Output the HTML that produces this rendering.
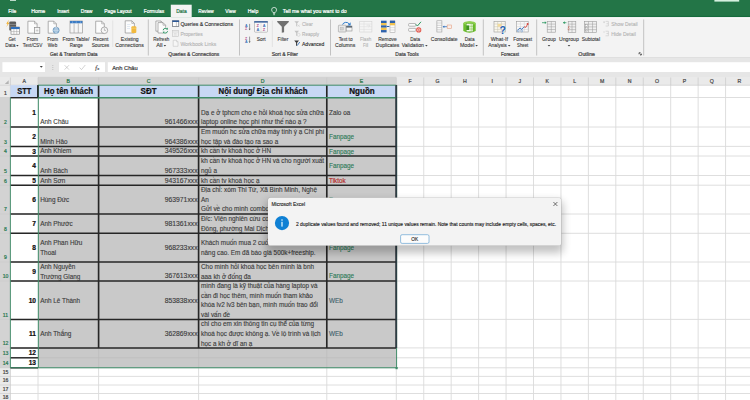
<!DOCTYPE html>
<html lang="vi"><head><meta charset="utf-8"><title>Excel - Remove Duplicates</title>
<style>
html,body{margin:0;padding:0;background:#fff;}
body{width:750px;height:400px;overflow:hidden;font-family:"Liberation Sans",sans-serif;}
svg{display:block;font-family:"Liberation Sans",sans-serif;}
</style></head><body>
<svg width="750" height="400" viewBox="0 0 750 400">
<rect x="0.00" y="0.00" width="750.00" height="400.00" fill="#ffffff" />
<rect x="0.00" y="0.00" width="750.00" height="17.40" fill="#237547" />
<rect x="0.00" y="15.90" width="750.00" height="1.50" fill="#166b3d" />
<rect x="714.40" y="0.00" width="24.80" height="1.60" fill="#d5f0df" />
<rect x="10.00" y="0.00" width="6.00" height="0.90" fill="#cfe6d8" />
<rect x="170.80" y="4.70" width="20.90" height="12.60" fill="#f3f3f3" />
<rect x="0.00" y="17.20" width="750.00" height="40.20" fill="#f3f3f3" />
<rect x="0.00" y="17.40" width="170.80" height="1.10" fill="#fcfcfc" />
<rect x="191.70" y="17.40" width="560.00" height="1.10" fill="#fcfcfc" />
<rect x="0.00" y="57.40" width="750.00" height="27.80" fill="#e6e6e6" />
<rect x="0.00" y="57.20" width="750.00" height="0.70" fill="#d9d9d9" />
<rect x="2.40" y="62.20" width="42.60" height="9.80" fill="#fff" />
<rect x="59.00" y="62.20" width="46.00" height="9.80" fill="#fff" />
<rect x="107.80" y="62.20" width="642.20" height="9.80" fill="#fff" />
<text x="8.30" y="13.12" font-size="5.5" fill="#ffffff" textLength="8.00" lengthAdjust="spacingAndGlyphs"  stroke="#ffffff" stroke-width="0.22">File</text>
<text x="31.20" y="13.12" font-size="5.5" fill="#ffffff" textLength="14.10" lengthAdjust="spacingAndGlyphs"  stroke="#ffffff" stroke-width="0.22">Home</text>
<text x="57.20" y="13.12" font-size="5.5" fill="#ffffff" textLength="12.00" lengthAdjust="spacingAndGlyphs"  stroke="#ffffff" stroke-width="0.22">Insert</text>
<text x="80.80" y="13.12" font-size="5.5" fill="#ffffff" textLength="11.70" lengthAdjust="spacingAndGlyphs"  stroke="#ffffff" stroke-width="0.22">Draw</text>
<text x="104.20" y="13.12" font-size="5.5" fill="#ffffff" textLength="27.50" lengthAdjust="spacingAndGlyphs"  stroke="#ffffff" stroke-width="0.22">Page Layout</text>
<text x="143.70" y="13.12" font-size="5.5" fill="#ffffff" textLength="20.50" lengthAdjust="spacingAndGlyphs"  stroke="#ffffff" stroke-width="0.22">Formulas</text>
<text x="198.30" y="13.12" font-size="5.5" fill="#ffffff" textLength="15.50" lengthAdjust="spacingAndGlyphs"  stroke="#ffffff" stroke-width="0.22">Review</text>
<text x="225.30" y="13.12" font-size="5.5" fill="#ffffff" textLength="10.50" lengthAdjust="spacingAndGlyphs"  stroke="#ffffff" stroke-width="0.22">View</text>
<text x="247.80" y="13.12" font-size="5.5" fill="#ffffff" textLength="10.50" lengthAdjust="spacingAndGlyphs"  stroke="#ffffff" stroke-width="0.22">Help</text>
<text x="282.80" y="13.12" font-size="5.5" fill="#ffffff" textLength="63.90" lengthAdjust="spacingAndGlyphs"  stroke="#ffffff" stroke-width="0.22">Tell me what you want to do</text>
<text x="176.30" y="13.12" font-size="5.5" fill="#237547" textLength="10.40" lengthAdjust="spacingAndGlyphs"  stroke="#237547" stroke-width="0.22">Data</text>
<g fill="none" stroke="#fff" stroke-width="0.7"><path d="M273 12.6c-0.3-0.9-1.4-1.3-1.4-2.7a2.5 2.5 0 0 1 5 0c0 1.4-1.1 1.8-1.4 2.7z"/><path d="M273.1 13.7h2M273.4 14.7h1.4"/></g>
<text x="8.40" y="40.52" font-size="5.5" fill="#3b3b3b" textLength="7.20" lengthAdjust="spacingAndGlyphs"  stroke="#3b3b3b" stroke-width="0.12">Get</text>
<text x="5.20" y="47.32" font-size="5.5" fill="#3b3b3b" textLength="10.20" lengthAdjust="spacingAndGlyphs"  stroke="#3b3b3b" stroke-width="0.12">Data</text>
<text x="26.80" y="40.52" font-size="5.5" fill="#3b3b3b" textLength="11.20" lengthAdjust="spacingAndGlyphs"  stroke="#3b3b3b" stroke-width="0.12">From</text>
<text x="22.80" y="47.32" font-size="5.5" fill="#3b3b3b" textLength="19.60" lengthAdjust="spacingAndGlyphs"  stroke="#3b3b3b" stroke-width="0.12">Text/CSV</text>
<text x="47.20" y="40.52" font-size="5.5" fill="#3b3b3b" textLength="10.80" lengthAdjust="spacingAndGlyphs"  stroke="#3b3b3b" stroke-width="0.12">From</text>
<text x="47.80" y="47.32" font-size="5.5" fill="#3b3b3b" textLength="9.40" lengthAdjust="spacingAndGlyphs"  stroke="#3b3b3b" stroke-width="0.12">Web</text>
<text x="62.50" y="40.52" font-size="5.5" fill="#3b3b3b" textLength="27.00" lengthAdjust="spacingAndGlyphs"  stroke="#3b3b3b" stroke-width="0.12">From Table/</text>
<text x="69.70" y="47.32" font-size="5.5" fill="#3b3b3b" textLength="13.10" lengthAdjust="spacingAndGlyphs"  stroke="#3b3b3b" stroke-width="0.12">Range</text>
<text x="93.00" y="40.52" font-size="5.5" fill="#3b3b3b" textLength="15.30" lengthAdjust="spacingAndGlyphs"  stroke="#3b3b3b" stroke-width="0.12">Recent</text>
<text x="91.70" y="47.32" font-size="5.5" fill="#3b3b3b" textLength="17.50" lengthAdjust="spacingAndGlyphs"  stroke="#3b3b3b" stroke-width="0.12">Sources</text>
<text x="120.80" y="40.52" font-size="5.5" fill="#3b3b3b" textLength="17.90" lengthAdjust="spacingAndGlyphs"  stroke="#3b3b3b" stroke-width="0.12">Existing</text>
<text x="115.30" y="47.32" font-size="5.5" fill="#3b3b3b" textLength="28.40" lengthAdjust="spacingAndGlyphs"  stroke="#3b3b3b" stroke-width="0.12">Connections</text>
<text x="153.30" y="40.52" font-size="5.5" fill="#3b3b3b" textLength="15.90" lengthAdjust="spacingAndGlyphs"  stroke="#3b3b3b" stroke-width="0.12">Refresh</text>
<text x="156.30" y="47.32" font-size="5.5" fill="#3b3b3b" textLength="6.30" lengthAdjust="spacingAndGlyphs"  stroke="#3b3b3b" stroke-width="0.12">All</text>
<text x="256.80" y="40.52" font-size="5.5" fill="#3b3b3b" textLength="8.80" lengthAdjust="spacingAndGlyphs"  stroke="#3b3b3b" stroke-width="0.12">Sort</text>
<text x="277.60" y="40.52" font-size="5.5" fill="#3b3b3b" textLength="10.80" lengthAdjust="spacingAndGlyphs"  stroke="#3b3b3b" stroke-width="0.12">Filter</text>
<text x="338.70" y="40.52" font-size="5.5" fill="#3b3b3b" textLength="13.80" lengthAdjust="spacingAndGlyphs"  stroke="#3b3b3b" stroke-width="0.12">Text to</text>
<text x="335.00" y="47.32" font-size="5.5" fill="#3b3b3b" textLength="20.30" lengthAdjust="spacingAndGlyphs"  stroke="#3b3b3b" stroke-width="0.12">Columns</text>
<text x="360.00" y="40.52" font-size="5.5" fill="#b4b4b4" textLength="11.30" lengthAdjust="spacingAndGlyphs"  stroke="#b4b4b4" stroke-width="0.12">Flash</text>
<text x="363.00" y="47.32" font-size="5.5" fill="#b4b4b4" textLength="5.30" lengthAdjust="spacingAndGlyphs"  stroke="#b4b4b4" stroke-width="0.12">Fill</text>
<text x="378.30" y="40.52" font-size="5.5" fill="#3b3b3b" textLength="18.40" lengthAdjust="spacingAndGlyphs"  stroke="#3b3b3b" stroke-width="0.12">Remove</text>
<text x="375.80" y="47.32" font-size="5.5" fill="#3b3b3b" textLength="23.40" lengthAdjust="spacingAndGlyphs"  stroke="#3b3b3b" stroke-width="0.12">Duplicates</text>
<text x="410.30" y="40.52" font-size="5.5" fill="#3b3b3b" textLength="9.70" lengthAdjust="spacingAndGlyphs"  stroke="#3b3b3b" stroke-width="0.12">Data</text>
<text x="401.70" y="47.32" font-size="5.5" fill="#3b3b3b" textLength="22.30" lengthAdjust="spacingAndGlyphs"  stroke="#3b3b3b" stroke-width="0.12">Validation</text>
<text x="430.80" y="40.52" font-size="5.5" fill="#3b3b3b" textLength="26.70" lengthAdjust="spacingAndGlyphs"  stroke="#3b3b3b" stroke-width="0.12">Consolidate</text>
<text x="464.70" y="40.52" font-size="5.5" fill="#3b3b3b" textLength="9.80" lengthAdjust="spacingAndGlyphs"  stroke="#3b3b3b" stroke-width="0.12">Data</text>
<text x="460.00" y="47.32" font-size="5.5" fill="#3b3b3b" textLength="14.30" lengthAdjust="spacingAndGlyphs"  stroke="#3b3b3b" stroke-width="0.12">Model</text>
<text x="490.80" y="40.52" font-size="5.5" fill="#3b3b3b" textLength="17.20" lengthAdjust="spacingAndGlyphs"  stroke="#3b3b3b" stroke-width="0.12">What-If</text>
<text x="488.30" y="47.32" font-size="5.5" fill="#3b3b3b" textLength="18.50" lengthAdjust="spacingAndGlyphs"  stroke="#3b3b3b" stroke-width="0.12">Analysis</text>
<text x="513.30" y="40.52" font-size="5.5" fill="#3b3b3b" textLength="18.70" lengthAdjust="spacingAndGlyphs"  stroke="#3b3b3b" stroke-width="0.12">Forecast</text>
<text x="517.00" y="47.32" font-size="5.5" fill="#3b3b3b" textLength="11.30" lengthAdjust="spacingAndGlyphs"  stroke="#3b3b3b" stroke-width="0.12">Sheet</text>
<text x="542.00" y="40.52" font-size="5.5" fill="#3b3b3b" textLength="13.80" lengthAdjust="spacingAndGlyphs"  stroke="#3b3b3b" stroke-width="0.12">Group</text>
<text x="559.00" y="40.52" font-size="5.5" fill="#3b3b3b" textLength="19.80" lengthAdjust="spacingAndGlyphs"  stroke="#3b3b3b" stroke-width="0.12">Ungroup</text>
<text x="581.70" y="40.52" font-size="5.5" fill="#3b3b3b" textLength="18.30" lengthAdjust="spacingAndGlyphs"  stroke="#3b3b3b" stroke-width="0.12">Subtotal</text>
<text x="180.40" y="26.12" font-size="5.5" fill="#2a2a2a" textLength="52.60" lengthAdjust="spacingAndGlyphs"  stroke="#2a2a2a" stroke-width="0.12">Queries &amp; Connections</text>
<text x="180.40" y="36.12" font-size="5.5" fill="#b4b4b4" textLength="22.40" lengthAdjust="spacingAndGlyphs"  stroke="#b4b4b4" stroke-width="0.12">Properties</text>
<text x="180.40" y="45.72" font-size="5.5" fill="#b4b4b4" textLength="36.00" lengthAdjust="spacingAndGlyphs"  stroke="#b4b4b4" stroke-width="0.12">Workbook Links</text>
<text x="302.00" y="26.12" font-size="5.5" fill="#b4b4b4" textLength="10.80" lengthAdjust="spacingAndGlyphs"  stroke="#b4b4b4" stroke-width="0.12">Clear</text>
<text x="302.00" y="36.12" font-size="5.5" fill="#b4b4b4" textLength="17.20" lengthAdjust="spacingAndGlyphs"  stroke="#b4b4b4" stroke-width="0.12">Reapply</text>
<text x="302.00" y="45.72" font-size="5.5" fill="#2a2a2a" textLength="22.40" lengthAdjust="spacingAndGlyphs"  stroke="#2a2a2a" stroke-width="0.12">Advanced</text>
<text x="611.20" y="25.93" font-size="5.5" fill="#b4b4b4" textLength="26.40" lengthAdjust="spacingAndGlyphs"  stroke="#b4b4b4" stroke-width="0.12">Show Detail</text>
<text x="611.20" y="35.82" font-size="5.5" fill="#b4b4b4" textLength="24.60" lengthAdjust="spacingAndGlyphs"  stroke="#b4b4b4" stroke-width="0.12">Hide Detail</text>
<path d="M16.10 45.00h2.6l-1.3 1.5z" fill="#444"/>
<path d="M163.60 45.00h2.6l-1.3 1.5z" fill="#444"/>
<path d="M425.10 45.00h2.6l-1.3 1.5z" fill="#444"/>
<path d="M475.30 45.00h2.6l-1.3 1.5z" fill="#444"/>
<path d="M507.90 45.00h2.6l-1.3 1.5z" fill="#444"/>
<path d="M547.70 45.00h2.6l-1.3 1.5z" fill="#444"/>
<path d="M567.70 45.00h2.6l-1.3 1.5z" fill="#444"/>
<text x="50.00" y="55.52" font-size="5.2" fill="#444" textLength="47.50" lengthAdjust="spacingAndGlyphs"  stroke="#444" stroke-width="0.22">Get &amp; Transform Data</text>
<text x="168.30" y="55.52" font-size="5.2" fill="#444" textLength="50.90" lengthAdjust="spacingAndGlyphs"  stroke="#444" stroke-width="0.22">Queries &amp; Connections</text>
<text x="271.70" y="55.52" font-size="5.2" fill="#444" textLength="26.30" lengthAdjust="spacingAndGlyphs"  stroke="#444" stroke-width="0.22">Sort &amp; Filter</text>
<text x="395.30" y="55.52" font-size="5.2" fill="#444" textLength="23.40" lengthAdjust="spacingAndGlyphs"  stroke="#444" stroke-width="0.22">Data Tools</text>
<text x="501.00" y="55.52" font-size="5.2" fill="#444" textLength="18.00" lengthAdjust="spacingAndGlyphs"  stroke="#444" stroke-width="0.22">Forecast</text>
<text x="578.30" y="55.52" font-size="5.2" fill="#444" textLength="16.70" lengthAdjust="spacingAndGlyphs"  stroke="#444" stroke-width="0.22">Outline</text>
<line x1="148.30" y1="19.50" x2="148.30" y2="55.50" stroke="#bcbcbc" stroke-width="0.9" />
<line x1="239.50" y1="19.50" x2="239.50" y2="55.50" stroke="#bcbcbc" stroke-width="0.9" />
<line x1="330.50" y1="19.50" x2="330.50" y2="55.50" stroke="#bcbcbc" stroke-width="0.9" />
<line x1="483.30" y1="19.50" x2="483.30" y2="55.50" stroke="#bcbcbc" stroke-width="0.9" />
<line x1="536.70" y1="19.50" x2="536.70" y2="55.50" stroke="#bcbcbc" stroke-width="0.9" />
<line x1="643.70" y1="19.50" x2="643.70" y2="55.50" stroke="#bcbcbc" stroke-width="0.9" />
<line x1="112.70" y1="20.50" x2="112.70" y2="47.00" stroke="#dcdcdc" stroke-width="0.7" />
<line x1="272.40" y1="20.50" x2="272.40" y2="47.00" stroke="#dcdcdc" stroke-width="0.7" />
<path d="M639 52.7h1.6M639 52.7v1.6M639.6 53.3l1.6 1.6M641.4 53.6v1.4h-1.4" stroke="#333" stroke-width="0.7" fill="none"/>
<path d="M8.9 19.8l-2.7 3.9h1.5l-1.4 3.2 3.2-4.2h-1.5z" fill="#f3b02e"/>
<rect x="9.3" y="21.6" width="6.8" height="9" rx="1.2" fill="#5b5b5b"/>
<path d="M9.3 24.4h6.8M9.3 27.0h6.8" stroke="#a9a9a9" stroke-width="0.6"/>
<rect x="11" y="27" width="8.6" height="7.2" fill="#fdfdfd" stroke="#7c7c7c" stroke-width="0.6"/>
<rect x="11" y="27" width="8.6" height="2.1" fill="#2f6fbc"/>
<path d="M11 31.6h8.6M13.9 29.1v5.1M16.7 29.1v5.1" stroke="#9c9c9c" stroke-width="0.5"/>
<path d="M27.9 21.2h6.6l2.6 2.6v9.4h-9.2z" fill="#fcfcfc" stroke="#8f8f8f" stroke-width="0.7" stroke-linejoin="round"/>
<path d="M34.49999999999999 21.2v2.6h2.6" fill="none" stroke="#8f8f8f" stroke-width="0.5599999999999999"/>
<rect x="34.4" y="27.4" width="5.4" height="6.2" fill="#f4f4f4" stroke="#8f8f8f" stroke-width="0.7"/>
<path d="M35.8 30.5h2.6M37.1 29.2v2.6" stroke="#b5b5b5" stroke-width="0.5"/>
<path d="M48.2 21.2h5.6l2.6 2.6v9.4h-8.2z" fill="#fcfcfc" stroke="#8f8f8f" stroke-width="0.7" stroke-linejoin="round"/>
<path d="M53.800000000000004 21.2v2.6h2.6" fill="none" stroke="#8f8f8f" stroke-width="0.5599999999999999"/>
<circle cx="56.1" cy="30.3" r="3.1" fill="#86aed0" stroke="#5f8fb9" stroke-width="0.6"/>
<path d="M53 30.3h6.2M56.1 27.2v6.2" stroke="#e8f1f8" stroke-width="0.45"/>
<ellipse cx="56.1" cy="30.3" rx="1.3" ry="3.1" fill="none" stroke="#e8f1f8" stroke-width="0.45"/>
<rect x="70" y="21" width="12.4" height="12" fill="#f6f6f6" stroke="#9a9a9a" stroke-width="0.7"/>
<rect x="70" y="21" width="12.4" height="2.3" fill="#3b7bc4"/>
<path d="M74.1 23.3v9.7M78.3 23.3v9.7" stroke="#a6a6a6" stroke-width="0.7"/>
<path d="M72 22.1h0.9M75.8 22.1h0.9M79.9 22.1h0.9" stroke="#dce9f7" stroke-width="0.6"/>
<path d="M95.7 21.2h6.0l2.6 2.6v9.4h-8.6z" fill="#fcfcfc" stroke="#8f8f8f" stroke-width="0.7" stroke-linejoin="round"/>
<path d="M101.7 21.2v2.6h2.6" fill="none" stroke="#8f8f8f" stroke-width="0.5599999999999999"/>
<circle cx="104.4" cy="30.3" r="3.3" fill="#f6f6f6" stroke="#8f8f8f" stroke-width="0.7"/>
<path d="M104.4 28.3v2.1h1.6" fill="none" stroke="#8f8f8f" stroke-width="0.55"/>
<path d="M125.2 20.8h6.6l2.6 2.6v9.6h-9.2z" fill="#fcfcfc" stroke="#8f8f8f" stroke-width="0.7" stroke-linejoin="round"/>
<path d="M131.8 20.8v2.6h2.6" fill="none" stroke="#8f8f8f" stroke-width="0.5599999999999999"/>
<path d="M127 24.5h3.6M127 26.5h3M127 28.5h3" stroke="#c9d8ea" stroke-width="0.5"/>
<rect x="131.4" y="26.2" width="4.9" height="6.9" rx="1" fill="#f1b93e"/>
<path d="M131.4 28.2h4.9" stroke="#f8dc93" stroke-width="0.5"/>
<path d="M155.9 21.0h5.0l2.6 2.6v7.6h-7.6z" fill="#fcfcfc" stroke="#8f8f8f" stroke-width="0.7" stroke-linejoin="round"/>
<path d="M160.9 21.0v2.6h2.6" fill="none" stroke="#8f8f8f" stroke-width="0.5599999999999999"/>
<path d="M158.0 22.6h5.0l2.6 2.6v7.800000000000001h-7.6z" fill="#fcfcfc" stroke="#8f8f8f" stroke-width="0.7" stroke-linejoin="round"/>
<path d="M163.0 22.6v2.6h2.6" fill="none" stroke="#8f8f8f" stroke-width="0.5599999999999999"/>
<circle cx="165.4" cy="30.7" r="3.2" fill="#f3f3f3"/>
<path d="M163.2 30.2a2.3 2.3 0 0 1 4.1-1" fill="none" stroke="#36996b" stroke-width="1.0"/>
<path d="M167.6 31.2a2.3 2.3 0 0 1-4.1 1" fill="none" stroke="#36996b" stroke-width="1.0"/>
<path d="M167.9 27.6v2h-2zM162.9 33.8v-2h2z" fill="#36996b"/>
<rect x="172.6" y="20.8" width="6.2" height="5.8" fill="#fdfdfd" stroke="#4d5560" stroke-width="0.6"/>
<rect x="172.3" y="20.5" width="6.8" height="1.5" fill="#2b5797"/>
<path d="M176.4 22v4.6" stroke="#8b8b8b" stroke-width="0.45"/>
<rect x="172.6" y="30.4" width="5.8" height="6.2" fill="#f0f0f0" stroke="#c6c6c6" stroke-width="0.6"/>
<path d="M172.6 32h5.8M174 33.6h2.6M174 35h2.6" stroke="#cfcfcf" stroke-width="0.5"/>
<path d="M173.2 40.3h3.3l1.5 1.5v4.5h-4.8z" fill="#f6f6f6" stroke="#c6c6c6" stroke-width="0.6" stroke-linejoin="round"/>
<path d="M176.5 40.3v1.5h1.5" fill="none" stroke="#c6c6c6" stroke-width="0.48"/>
<text x="245" y="26.799999999999997" font-size="3.6" font-weight="bold" fill="#3a6fb5">A</text>
<text x="245" y="30.2" font-size="3.6" font-weight="bold" fill="#b0508c">Z</text>
<path d="M249.6 23.9v5.4" stroke="#5a5a5a" stroke-width="0.6"/><path d="M248.6 28.7h2l-1 1.5z" fill="#5a5a5a"/>
<text x="245" y="39.5" font-size="3.6" font-weight="bold" fill="#b0508c">Z</text>
<text x="245" y="42.9" font-size="3.6" font-weight="bold" fill="#3a6fb5">A</text>
<path d="M249.6 36.6v5.4" stroke="#5a5a5a" stroke-width="0.6"/><path d="M248.6 41.4h2l-1 1.5z" fill="#5a5a5a"/>
<rect x="254.5" y="21.5" width="13" height="10.7" rx="0.8" fill="#f8f8f8" stroke="#a2a2a2" stroke-width="0.6"/>
<rect x="254.2" y="21.2" width="13.6" height="1.4" fill="#2b5797"/>
<path d="M261 22.6v9.6" stroke="#cfcfcf" stroke-width="0.5"/>
<text x="256.6" y="26.8" font-size="3.9" font-weight="bold" fill="#b0508c">Z</text>
<text x="256.6" y="31.2" font-size="3.9" font-weight="bold" fill="#3a6fb5">A</text>
<text x="262.8" y="26.8" font-size="3.9" font-weight="bold" fill="#3a6fb5">A</text>
<text x="262.8" y="31.2" font-size="3.9" font-weight="bold" fill="#b0508c">Z</text>
<path d="M277.2 21h11.6v0.9l-4.7 4.9v5.4l-2.3 0.6v-6l-4.6-4.9z" fill="#707070"/>
<path d="M294.4 21.2h4.6l-1.8 2.1v2.6l-1.0 0.5v-3.1z" fill="#c3c3c3"/>
<path d="M297.6 24.6l2.2 2.2M299.8 24.6l-2.2 2.2" stroke="#c9c9c9" stroke-width="0.55"/>
<path d="M294.4 30.8h4.6l-1.8 2.1v2.6l-1.0 0.5v-3.1z" fill="#c3c3c3"/>
<circle cx="298.6" cy="34.8" r="1.5" fill="none" stroke="#c9c9c9" stroke-width="0.55"/>
<path d="M294.2 40.6h4.83l-1.8900000000000001 2.205v2.7300000000000004l-1.05 0.525v-3.2550000000000003z" fill="#3a3a3a"/>
<path d="M297.2 45.6l2.6-3.6" stroke="#3c78c0" stroke-width="0.9"/>
<rect x="338.4" y="25.2" width="7.6" height="6.8" rx="0.6" fill="#e9e9e9" stroke="#9c9c9c" stroke-width="0.6"/>
<rect x="340.6" y="27.4" width="2.6" height="2.6" fill="#d2d2d2" stroke="#aaa" stroke-width="0.4"/>
<rect x="346.2" y="26" width="5.8" height="5" fill="#f4f4f4" stroke="#8f8f8f" stroke-width="0.6"/>
<rect x="346.2" y="26" width="5.8" height="1.6" fill="#5f6a75"/>
<path d="M342.6 24.6a3.6 3.2 0 0 1 6.6-0.6" fill="none" stroke="#2f7dcb" stroke-width="1.0"/>
<path d="M350.6 22.2v3.2h-3.2z" fill="#2f7dcb"/>
<rect x="359.7" y="21.4" width="12.2" height="10.6" fill="#f5f5f5" stroke="#d2d2d2" stroke-width="0.6"/>
<path d="M359.7 24h12.2M359.7 26.7h12.2M359.7 29.4h12.2M364 21.4v10.6" stroke="#dadada" stroke-width="0.5"/>
<path d="M366.6 25.2l3.4 0 -1.4 2.2" fill="none" stroke="#dcdcdc" stroke-width="0.6"/>
<rect x="381" y="20.70" width="5.6" height="2.34" fill="#2d62ad"/>
<rect x="381" y="23.04" width="5.6" height="2.34" fill="#f2c24e"/>
<rect x="381" y="25.38" width="5.6" height="2.34" fill="#2d62ad"/>
<rect x="381" y="27.72" width="5.6" height="2.34" fill="#f2c24e"/>
<rect x="381" y="30.06" width="5.6" height="2.34" fill="#2d62ad"/>
<rect x="390" y="20.9" width="5" height="11.4" fill="#fbfbfb" stroke="#9d9d9d" stroke-width="0.5"/>
<rect x="390" y="20.7" width="5" height="2.3" fill="#2d62ad"/>
<rect x="390" y="23" width="5" height="2.3" fill="#f2c24e"/>
<path d="M390 27.6h5M390 30h5" stroke="#b9b9b9" stroke-width="0.45"/>
<path d="M386.8 26.5h2.6" stroke="#2d62ad" stroke-width="1.0"/>
<rect x="408.6" y="23.5" width="7.2" height="2.7" rx="0.8" fill="#fbfbfb" stroke="#8f8f8f" stroke-width="0.6"/>
<rect x="408.6" y="28.4" width="7.2" height="2.9" rx="0.8" fill="#fbfbfb" stroke="#8f8f8f" stroke-width="0.6"/>
<path d="M415.8 24.3l1.6 1.7 3.6-4.2" fill="none" stroke="#2e9a63" stroke-width="1.0"/>
<circle cx="418.7" cy="29.9" r="2.6" fill="#e2574c"/>
<circle cx="418.7" cy="29.9" r="1.3" fill="none" stroke="#fbe3e0" stroke-width="0.6"/>
<path d="M417.8 30.8l1.8-1.8" stroke="#fbe3e0" stroke-width="0.55"/>
<rect x="436.9" y="20.8" width="5" height="11.2" fill="#fbfbfb" stroke="#9a9a9a" stroke-width="0.6"/>
<path d="M436.9 23h5M436.9 25.3h5M436.9 27.6h5M436.9 29.8h5" stroke="#a9a9a9" stroke-width="0.5"/>
<path d="M443.6 26.7h3.4" stroke="#2f6fbc" stroke-width="0.8"/><path d="M442.6 26.7l1.7-1.3v2.6z" fill="#2f6fbc"/>
<rect x="447.2" y="25" width="4.4" height="3.6" fill="#fbeee9" stroke="#e3a184" stroke-width="0.6"/>
<path d="M463.3 23.2q6.2-3.6 12.4 0v7.8q-6.2 3.6-12.4 0z" fill="#6cbd2d"/>
<ellipse cx="469.5" cy="23.2" rx="6.2" ry="2" fill="#8ed14f"/>
<rect x="466.2" y="23.6" width="6.8" height="8.2" fill="#f1f9e9" stroke="#4f9d1c" stroke-width="0.4"/>
<rect x="466.2" y="25.4" width="3" height="4.6" fill="#3f9420"/>
<path d="M469.2 26.3h3.8M469.2 29h3.8M471.2 23.6v8.2" stroke="#6cbd2d" stroke-width="0.45"/>
<rect x="494" y="21.4" width="11.2" height="10.6" fill="#fbf8ee" stroke="#9a9a9a" stroke-width="0.6"/>
<path d="M494 24h11.2M494 26.7h11.2M494 29.4h11.2M497.7 21.4v10.6M501.4 21.4v10.6" stroke="#c3bfae" stroke-width="0.5"/>
<rect x="497.7" y="24" width="3.7" height="2.7" fill="#f4dc9a"/>
<text x="499.6" y="33.6" font-size="10.5" font-weight="bold" fill="#2463b4" stroke="#f3f3f3" stroke-width="0.5" paint-order="stroke">?</text>
<rect x="516.6" y="21.4" width="11.6" height="10.6" fill="#fafafa" stroke="#9a9a9a" stroke-width="0.6"/>
<path d="M516.6 24h11.6M516.6 26.7h11.6M516.6 29.4h11.6M520.4 21.4v10.6M524.3 21.4v10.6" stroke="#cdcdcd" stroke-width="0.5"/>
<path d="M517.4 30.4l2.6-2.4 1.8 1.4 2.2-2.6" fill="none" stroke="#2f6fbc" stroke-width="0.9"/>
<path d="M524 26.8l1.8 0.6 1.8-3.2" fill="none" stroke="#d8463c" stroke-width="0.9"/>
<circle cx="527.6" cy="24.1" r="1.0" fill="#d8463c"/>
<circle cx="518.2" cy="30.8" r="1.0" fill="#f3f3f3" stroke="#2f6fbc" stroke-width="0.4"/><circle cx="521.8" cy="30.9" r="1.0" fill="#f3f3f3" stroke="#2f6fbc" stroke-width="0.4"/>
<rect x="547.2" y="21.4" width="8.2" height="10.8" fill="#f0f0f0" stroke="#9a9a9a" stroke-width="0.6"/>
<path d="M547.2 24.10h8.2M547.2 26.80h8.2M547.2 29.50h8.2M551.30 21.4v10.8" stroke="#9a9a9a" stroke-width="0.5"/>
<path d="M542 22.7h3.2" stroke="#2e9a63" stroke-width="0.8"/><path d="M546.6 22.7l-1.8-1.4v2.8z" fill="#2e9a63"/>
<rect x="568.2" y="21.4" width="7.6" height="11.0" fill="#f0f0f0" stroke="#9a9a9a" stroke-width="0.6"/>
<path d="M568.2 24.15h7.6M568.2 26.90h7.6M568.2 29.65h7.6M572.00 21.4v11.0" stroke="#9a9a9a" stroke-width="0.5"/>
<path d="M563.2 22.7h3.2" stroke="#2e9a63" stroke-width="0.8"/><path d="M563 22.7l1.8-1.4v2.8z" fill="#2e9a63"/>
<path d="M569.6 26l-1.6 1.3 1.6 1.3M567.6 29.2l1.6 1" fill="none" stroke="#d8563c" stroke-width="0.6"/>
<rect x="584.4" y="21.4" width="12.2" height="11.0" fill="#f0f0f0" stroke="#9a9a9a" stroke-width="0.6"/>
<path d="M584.4 24.15h12.2M584.4 26.90h12.2M584.4 29.65h12.2M588.47 21.4v11.0M592.53 21.4v11.0" stroke="#9a9a9a" stroke-width="0.5"/>
<rect x="585.6" y="24.8" width="1.6" height="1.4" fill="#fff" stroke="#777" stroke-width="0.3"/><rect x="585.6" y="27.6" width="1.6" height="1.4" fill="#fff" stroke="#777" stroke-width="0.3"/><rect x="585.6" y="30.2" width="1.6" height="1.4" fill="#fff" stroke="#777" stroke-width="0.3"/>
<path d="M605.6 21.4h2.8v4.6h-2.8M606.4 23.7h2" fill="none" stroke="#c4c4c4" stroke-width="0.55"/>
<path d="M603.2 22.2h1.8" stroke="#c4c4c4" stroke-width="0.5"/>
<path d="M605.6 31.2h2.8v4.6h-2.8M606.4 33.5h2" fill="none" stroke="#c4c4c4" stroke-width="0.55"/>
<path d="M603.2 32.0h1.8" stroke="#c4c4c4" stroke-width="0.5"/>
<path d="M604.1 21.3v1.8" stroke="#c4c4c4" stroke-width="0.5"/>
<path d="M39.8 66.0h3l-1.5 1.8z" fill="#444"/>
<rect x="52.50" y="65.30" width="0.70" height="0.70" fill="#9a9a9a" />
<rect x="52.50" y="67.30" width="0.70" height="0.70" fill="#9a9a9a" />
<rect x="52.50" y="69.30" width="0.70" height="0.70" fill="#9a9a9a" />
<path d="M64.6 65.2l4.4 4.4M69 65.2l-4.4 4.4" stroke="#b4b4b4" stroke-width="0.6"/>
<path d="M79.6 67.6l1.9 2 3.8-4.6" stroke="#b4b4b4" stroke-width="0.6" fill="none"/>
<text x="95.30" y="69.70" font-size="6" fill="#555" font-style="italic" font-family="Liberation Serif, serif" stroke="#555" stroke-width="0.22">f</text>
<text x="97.30" y="69.98" font-size="4.5" fill="#555" font-style="italic" font-family="Liberation Serif, serif" stroke="#555" stroke-width="0.22">x</text>
<text x="112.30" y="69.56" font-size="5.6" fill="#444" textLength="25.40" lengthAdjust="spacingAndGlyphs"  stroke="#444" stroke-width="0.22">Anh Châu</text>
<rect x="0.00" y="77.00" width="750.00" height="8.20" fill="#eaeaea" />
<rect x="38.00" y="76.80" width="358.30" height="8.40" fill="#d3d3d3" />
<rect x="0.00" y="85.20" width="10.40" height="320.00" fill="#eaeaea" />
<rect x="0.00" y="97.50" width="10.40" height="270.30" fill="#d3d3d3" />
<line x1="396.30" y1="85.20" x2="396.30" y2="400.00" stroke="#dadada" stroke-width="0.9" />
<line x1="423.74" y1="85.20" x2="423.74" y2="400.00" stroke="#dadada" stroke-width="0.9" />
<line x1="451.18" y1="85.20" x2="451.18" y2="400.00" stroke="#dadada" stroke-width="0.9" />
<line x1="478.62" y1="85.20" x2="478.62" y2="400.00" stroke="#dadada" stroke-width="0.9" />
<line x1="506.06" y1="85.20" x2="506.06" y2="400.00" stroke="#dadada" stroke-width="0.9" />
<line x1="533.50" y1="85.20" x2="533.50" y2="400.00" stroke="#dadada" stroke-width="0.9" />
<line x1="560.94" y1="85.20" x2="560.94" y2="400.00" stroke="#dadada" stroke-width="0.9" />
<line x1="588.38" y1="85.20" x2="588.38" y2="400.00" stroke="#dadada" stroke-width="0.9" />
<line x1="615.82" y1="85.20" x2="615.82" y2="400.00" stroke="#dadada" stroke-width="0.9" />
<line x1="643.26" y1="85.20" x2="643.26" y2="400.00" stroke="#dadada" stroke-width="0.9" />
<line x1="670.70" y1="85.20" x2="670.70" y2="400.00" stroke="#dadada" stroke-width="0.9" />
<line x1="698.14" y1="85.20" x2="698.14" y2="400.00" stroke="#dadada" stroke-width="0.9" />
<line x1="725.58" y1="85.20" x2="725.58" y2="400.00" stroke="#dadada" stroke-width="0.9" />
<line x1="753.02" y1="85.20" x2="753.02" y2="400.00" stroke="#dadada" stroke-width="0.9" />
<line x1="780.46" y1="85.20" x2="780.46" y2="400.00" stroke="#dadada" stroke-width="0.9" />
<line x1="38.00" y1="367.80" x2="38.00" y2="400.00" stroke="#dadada" stroke-width="0.9" />
<line x1="98.60" y1="367.80" x2="98.60" y2="400.00" stroke="#dadada" stroke-width="0.9" />
<line x1="198.60" y1="367.80" x2="198.60" y2="400.00" stroke="#dadada" stroke-width="0.9" />
<line x1="326.80" y1="367.80" x2="326.80" y2="400.00" stroke="#dadada" stroke-width="0.9" />
<line x1="10.40" y1="97.50" x2="750.00" y2="97.50" stroke="#dadada" stroke-width="0.9" />
<line x1="10.40" y1="127.00" x2="750.00" y2="127.00" stroke="#dadada" stroke-width="0.9" />
<line x1="10.40" y1="146.40" x2="750.00" y2="146.40" stroke="#dadada" stroke-width="0.9" />
<line x1="10.40" y1="156.00" x2="750.00" y2="156.00" stroke="#dadada" stroke-width="0.9" />
<line x1="10.40" y1="175.50" x2="750.00" y2="175.50" stroke="#dadada" stroke-width="0.9" />
<line x1="10.40" y1="185.20" x2="750.00" y2="185.20" stroke="#dadada" stroke-width="0.9" />
<line x1="10.40" y1="214.00" x2="750.00" y2="214.00" stroke="#dadada" stroke-width="0.9" />
<line x1="10.40" y1="233.30" x2="750.00" y2="233.30" stroke="#dadada" stroke-width="0.9" />
<line x1="10.40" y1="262.00" x2="750.00" y2="262.00" stroke="#dadada" stroke-width="0.9" />
<line x1="10.40" y1="281.00" x2="750.00" y2="281.00" stroke="#dadada" stroke-width="0.9" />
<line x1="10.40" y1="319.40" x2="750.00" y2="319.40" stroke="#dadada" stroke-width="0.9" />
<line x1="10.40" y1="347.90" x2="750.00" y2="347.90" stroke="#dadada" stroke-width="0.9" />
<line x1="10.40" y1="357.80" x2="750.00" y2="357.80" stroke="#dadada" stroke-width="0.9" />
<line x1="10.40" y1="367.80" x2="750.00" y2="367.80" stroke="#dadada" stroke-width="0.9" />
<line x1="10.40" y1="376.40" x2="750.00" y2="376.40" stroke="#dadada" stroke-width="0.9" />
<line x1="10.40" y1="385.00" x2="750.00" y2="385.00" stroke="#dadada" stroke-width="0.9" />
<line x1="10.40" y1="393.50" x2="750.00" y2="393.50" stroke="#dadada" stroke-width="0.9" />
<line x1="10.40" y1="402.00" x2="750.00" y2="402.00" stroke="#dadada" stroke-width="0.9" />
<line x1="10.40" y1="77.50" x2="10.40" y2="85.20" stroke="#c9c9c9" stroke-width="0.7" />
<line x1="38.00" y1="77.50" x2="38.00" y2="85.20" stroke="#c9c9c9" stroke-width="0.7" />
<line x1="98.60" y1="77.50" x2="98.60" y2="85.20" stroke="#c9c9c9" stroke-width="0.7" />
<line x1="198.60" y1="77.50" x2="198.60" y2="85.20" stroke="#c9c9c9" stroke-width="0.7" />
<line x1="326.80" y1="77.50" x2="326.80" y2="85.20" stroke="#c9c9c9" stroke-width="0.7" />
<line x1="396.30" y1="77.50" x2="396.30" y2="85.20" stroke="#c9c9c9" stroke-width="0.7" />
<line x1="423.74" y1="77.50" x2="423.74" y2="85.20" stroke="#c9c9c9" stroke-width="0.7" />
<line x1="451.18" y1="77.50" x2="451.18" y2="85.20" stroke="#c9c9c9" stroke-width="0.7" />
<line x1="478.62" y1="77.50" x2="478.62" y2="85.20" stroke="#c9c9c9" stroke-width="0.7" />
<line x1="506.06" y1="77.50" x2="506.06" y2="85.20" stroke="#c9c9c9" stroke-width="0.7" />
<line x1="533.50" y1="77.50" x2="533.50" y2="85.20" stroke="#c9c9c9" stroke-width="0.7" />
<line x1="560.94" y1="77.50" x2="560.94" y2="85.20" stroke="#c9c9c9" stroke-width="0.7" />
<line x1="588.38" y1="77.50" x2="588.38" y2="85.20" stroke="#c9c9c9" stroke-width="0.7" />
<line x1="615.82" y1="77.50" x2="615.82" y2="85.20" stroke="#c9c9c9" stroke-width="0.7" />
<line x1="643.26" y1="77.50" x2="643.26" y2="85.20" stroke="#c9c9c9" stroke-width="0.7" />
<line x1="670.70" y1="77.50" x2="670.70" y2="85.20" stroke="#c9c9c9" stroke-width="0.7" />
<line x1="698.14" y1="77.50" x2="698.14" y2="85.20" stroke="#c9c9c9" stroke-width="0.7" />
<line x1="725.58" y1="77.50" x2="725.58" y2="85.20" stroke="#c9c9c9" stroke-width="0.7" />
<line x1="753.02" y1="77.50" x2="753.02" y2="85.20" stroke="#c9c9c9" stroke-width="0.7" />
<line x1="780.46" y1="77.50" x2="780.46" y2="85.20" stroke="#c9c9c9" stroke-width="0.7" />
<line x1="0.00" y1="97.50" x2="10.40" y2="97.50" stroke="#c9c9c9" stroke-width="0.6" />
<line x1="0.00" y1="127.00" x2="10.40" y2="127.00" stroke="#c9c9c9" stroke-width="0.6" />
<line x1="0.00" y1="146.40" x2="10.40" y2="146.40" stroke="#c9c9c9" stroke-width="0.6" />
<line x1="0.00" y1="156.00" x2="10.40" y2="156.00" stroke="#c9c9c9" stroke-width="0.6" />
<line x1="0.00" y1="175.50" x2="10.40" y2="175.50" stroke="#c9c9c9" stroke-width="0.6" />
<line x1="0.00" y1="185.20" x2="10.40" y2="185.20" stroke="#c9c9c9" stroke-width="0.6" />
<line x1="0.00" y1="214.00" x2="10.40" y2="214.00" stroke="#c9c9c9" stroke-width="0.6" />
<line x1="0.00" y1="233.30" x2="10.40" y2="233.30" stroke="#c9c9c9" stroke-width="0.6" />
<line x1="0.00" y1="262.00" x2="10.40" y2="262.00" stroke="#c9c9c9" stroke-width="0.6" />
<line x1="0.00" y1="281.00" x2="10.40" y2="281.00" stroke="#c9c9c9" stroke-width="0.6" />
<line x1="0.00" y1="319.40" x2="10.40" y2="319.40" stroke="#c9c9c9" stroke-width="0.6" />
<line x1="0.00" y1="347.90" x2="10.40" y2="347.90" stroke="#c9c9c9" stroke-width="0.6" />
<line x1="0.00" y1="357.80" x2="10.40" y2="357.80" stroke="#c9c9c9" stroke-width="0.6" />
<line x1="0.00" y1="367.80" x2="10.40" y2="367.80" stroke="#c9c9c9" stroke-width="0.6" />
<line x1="0.00" y1="376.40" x2="10.40" y2="376.40" stroke="#c9c9c9" stroke-width="0.6" />
<line x1="0.00" y1="385.00" x2="10.40" y2="385.00" stroke="#c9c9c9" stroke-width="0.6" />
<line x1="0.00" y1="393.50" x2="10.40" y2="393.50" stroke="#c9c9c9" stroke-width="0.6" />
<line x1="0.00" y1="402.00" x2="10.40" y2="402.00" stroke="#c9c9c9" stroke-width="0.6" />
<line x1="10.40" y1="85.20" x2="10.40" y2="400.00" stroke="#c9c9c9" stroke-width="0.7" />
<line x1="0.00" y1="85.20" x2="750.00" y2="85.20" stroke="#c9c9c9" stroke-width="0.6" />
<path d="M8.7 80.2v3.8h-3.9z" fill="#b2b2b2"/>
<text x="24.20" y="83.22" font-size="5.2" fill="#4a4a4a" text-anchor="middle"  stroke="#4a4a4a" stroke-width="0.22">A</text>
<text x="68.30" y="83.22" font-size="5.2" fill="#237547" text-anchor="middle"  stroke="#237547" stroke-width="0.22">B</text>
<text x="148.60" y="83.22" font-size="5.2" fill="#237547" text-anchor="middle"  stroke="#237547" stroke-width="0.22">C</text>
<text x="262.70" y="83.22" font-size="5.2" fill="#237547" text-anchor="middle"  stroke="#237547" stroke-width="0.22">D</text>
<text x="361.55" y="83.22" font-size="5.2" fill="#237547" text-anchor="middle"  stroke="#237547" stroke-width="0.22">E</text>
<text x="410.02" y="83.22" font-size="5.2" fill="#4a4a4a" text-anchor="middle"  stroke="#4a4a4a" stroke-width="0.22">F</text>
<text x="437.46" y="83.22" font-size="5.2" fill="#4a4a4a" text-anchor="middle"  stroke="#4a4a4a" stroke-width="0.22">G</text>
<text x="464.90" y="83.22" font-size="5.2" fill="#4a4a4a" text-anchor="middle"  stroke="#4a4a4a" stroke-width="0.22">H</text>
<text x="492.34" y="83.22" font-size="5.2" fill="#4a4a4a" text-anchor="middle"  stroke="#4a4a4a" stroke-width="0.22">I</text>
<text x="519.78" y="83.22" font-size="5.2" fill="#4a4a4a" text-anchor="middle"  stroke="#4a4a4a" stroke-width="0.22">J</text>
<text x="547.22" y="83.22" font-size="5.2" fill="#4a4a4a" text-anchor="middle"  stroke="#4a4a4a" stroke-width="0.22">K</text>
<text x="574.66" y="83.22" font-size="5.2" fill="#4a4a4a" text-anchor="middle"  stroke="#4a4a4a" stroke-width="0.22">L</text>
<text x="602.10" y="83.22" font-size="5.2" fill="#4a4a4a" text-anchor="middle"  stroke="#4a4a4a" stroke-width="0.22">M</text>
<text x="629.54" y="83.22" font-size="5.2" fill="#4a4a4a" text-anchor="middle"  stroke="#4a4a4a" stroke-width="0.22">N</text>
<text x="656.98" y="83.22" font-size="5.2" fill="#4a4a4a" text-anchor="middle"  stroke="#4a4a4a" stroke-width="0.22">O</text>
<text x="684.42" y="83.22" font-size="5.2" fill="#4a4a4a" text-anchor="middle"  stroke="#4a4a4a" stroke-width="0.22">P</text>
<text x="711.86" y="83.22" font-size="5.2" fill="#4a4a4a" text-anchor="middle"  stroke="#4a4a4a" stroke-width="0.22">Q</text>
<text x="739.30" y="83.22" font-size="5.2" fill="#4a4a4a" text-anchor="middle"  stroke="#4a4a4a" stroke-width="0.22">R</text>
<text x="5.50" y="94.98" font-size="5.1" fill="#4a4a4a" text-anchor="middle"  stroke="#4a4a4a" stroke-width="0.22">1</text>
<text x="5.50" y="124.48" font-size="5.1" fill="#2a7a52" text-anchor="middle"  stroke="#2a7a52" stroke-width="0.22">2</text>
<text x="5.50" y="143.88" font-size="5.1" fill="#2a7a52" text-anchor="middle"  stroke="#2a7a52" stroke-width="0.22">3</text>
<text x="5.50" y="153.48" font-size="5.1" fill="#2a7a52" text-anchor="middle"  stroke="#2a7a52" stroke-width="0.22">4</text>
<text x="5.50" y="172.98" font-size="5.1" fill="#2a7a52" text-anchor="middle"  stroke="#2a7a52" stroke-width="0.22">5</text>
<text x="5.50" y="182.68" font-size="5.1" fill="#2a7a52" text-anchor="middle"  stroke="#2a7a52" stroke-width="0.22">6</text>
<text x="5.50" y="211.48" font-size="5.1" fill="#2a7a52" text-anchor="middle"  stroke="#2a7a52" stroke-width="0.22">7</text>
<text x="5.50" y="230.78" font-size="5.1" fill="#2a7a52" text-anchor="middle"  stroke="#2a7a52" stroke-width="0.22">8</text>
<text x="5.50" y="259.49" font-size="5.1" fill="#2a7a52" text-anchor="middle"  stroke="#2a7a52" stroke-width="0.22">9</text>
<text x="5.50" y="278.49" font-size="5.1" fill="#2a7a52" text-anchor="middle"  stroke="#2a7a52" stroke-width="0.22">10</text>
<text x="5.50" y="316.88" font-size="5.1" fill="#2a7a52" text-anchor="middle"  stroke="#2a7a52" stroke-width="0.22">11</text>
<text x="5.50" y="345.38" font-size="5.1" fill="#2a7a52" text-anchor="middle"  stroke="#2a7a52" stroke-width="0.22">12</text>
<text x="5.50" y="355.29" font-size="5.1" fill="#2a7a52" text-anchor="middle"  stroke="#2a7a52" stroke-width="0.22">13</text>
<text x="5.50" y="365.29" font-size="5.1" fill="#2a7a52" text-anchor="middle"  stroke="#2a7a52" stroke-width="0.22">14</text>
<text x="5.50" y="373.88" font-size="5.1" fill="#4a4a4a" text-anchor="middle"  stroke="#4a4a4a" stroke-width="0.22">15</text>
<text x="5.50" y="382.49" font-size="5.1" fill="#4a4a4a" text-anchor="middle"  stroke="#4a4a4a" stroke-width="0.22">16</text>
<text x="5.50" y="390.99" font-size="5.1" fill="#4a4a4a" text-anchor="middle"  stroke="#4a4a4a" stroke-width="0.22">17</text>
<text x="5.50" y="399.49" font-size="5.1" fill="#4a4a4a" text-anchor="middle"  stroke="#4a4a4a" stroke-width="0.22">18</text>
<rect x="10.40" y="85.20" width="385.90" height="12.30" fill="#c7d8f4" />
<rect x="38.00" y="97.50" width="358.30" height="270.30" fill="#c9c9c9" />
<rect x="38.60" y="98.30" width="59.40" height="28.30" fill="#fff" />
<line x1="38.00" y1="357.80" x2="396.30" y2="357.80" stroke="#bcbcbc" stroke-width="0.8" />
<line x1="98.60" y1="347.90" x2="98.60" y2="367.80" stroke="#bdbdbd" stroke-width="0.7" />
<line x1="198.60" y1="347.90" x2="198.60" y2="367.80" stroke="#bdbdbd" stroke-width="0.7" />
<line x1="326.80" y1="347.90" x2="326.80" y2="367.80" stroke="#bdbdbd" stroke-width="0.7" />
<line x1="10.40" y1="127.00" x2="396.30" y2="127.00" stroke="#262626" stroke-width="1.45" />
<line x1="10.40" y1="146.40" x2="396.30" y2="146.40" stroke="#262626" stroke-width="1.45" />
<line x1="10.40" y1="156.00" x2="396.30" y2="156.00" stroke="#262626" stroke-width="1.45" />
<line x1="10.40" y1="175.50" x2="396.30" y2="175.50" stroke="#262626" stroke-width="1.45" />
<line x1="10.40" y1="185.20" x2="396.30" y2="185.20" stroke="#262626" stroke-width="1.45" />
<line x1="10.40" y1="214.00" x2="396.30" y2="214.00" stroke="#262626" stroke-width="1.45" />
<line x1="10.40" y1="233.30" x2="396.30" y2="233.30" stroke="#262626" stroke-width="1.45" />
<line x1="10.40" y1="262.00" x2="396.30" y2="262.00" stroke="#262626" stroke-width="1.45" />
<line x1="10.40" y1="281.00" x2="396.30" y2="281.00" stroke="#262626" stroke-width="1.45" />
<line x1="10.40" y1="319.40" x2="396.30" y2="319.40" stroke="#262626" stroke-width="1.45" />
<line x1="10.40" y1="347.90" x2="396.30" y2="347.90" stroke="#262626" stroke-width="1.45" />
<line x1="10.40" y1="97.70" x2="38.00" y2="97.70" stroke="#262626" stroke-width="1.45" />
<line x1="10.40" y1="357.80" x2="38.00" y2="357.80" stroke="#262626" stroke-width="1.45" />
<line x1="10.40" y1="367.80" x2="38.00" y2="367.80" stroke="#262626" stroke-width="1.45" />
<line x1="98.60" y1="85.20" x2="98.60" y2="347.90" stroke="#262626" stroke-width="1.65" />
<line x1="198.60" y1="85.20" x2="198.60" y2="347.90" stroke="#262626" stroke-width="1.65" />
<line x1="326.80" y1="85.20" x2="326.80" y2="347.90" stroke="#262626" stroke-width="1.65" />
<line x1="396.30" y1="85.20" x2="396.30" y2="347.90" stroke="#262626" stroke-width="1.65" />
<line x1="38.00" y1="85.20" x2="38.00" y2="97.50" stroke="#262626" stroke-width="1.65" />
<line x1="38.00" y1="85.20" x2="396.30" y2="85.20" stroke="#3f8c68" stroke-width="1.0" />
<line x1="38.00" y1="97.75" x2="396.30" y2="97.75" stroke="#3f8c68" stroke-width="1.3" />
<line x1="38.30" y1="85.20" x2="38.30" y2="367.80" stroke="#3f8c68" stroke-width="1.0" />
<line x1="10.40" y1="97.50" x2="10.40" y2="367.80" stroke="#3f8c68" stroke-width="0.9" />
<line x1="396.60" y1="85.20" x2="396.60" y2="367.80" stroke="#3f8c68" stroke-width="1.0" />
<line x1="10.40" y1="367.80" x2="396.60" y2="367.80" stroke="#3f8c68" stroke-width="1.1" />
<rect x="395.50" y="367.00" width="2.20" height="2.20" fill="#3f8c68" />
<line x1="37.90" y1="85.20" x2="37.90" y2="97.50" stroke="#262626" stroke-width="1.4" />
<line x1="396.20" y1="84.90" x2="396.20" y2="347.90" stroke="#2a3340" stroke-width="1.3" />
<text x="24.20" y="94.34" font-size="8.4" fill="#111" text-anchor="middle" font-weight="bold" textLength="14.00" lengthAdjust="spacingAndGlyphs"  stroke="#111" stroke-width="0.22">STT</text>
<text x="68.50" y="94.34" font-size="8.4" fill="#111" text-anchor="middle" font-weight="bold" textLength="49.00" lengthAdjust="spacingAndGlyphs"  stroke="#111" stroke-width="0.22">Họ tên khách</text>
<text x="148.60" y="94.34" font-size="8.4" fill="#111" text-anchor="middle" font-weight="bold" textLength="16.00" lengthAdjust="spacingAndGlyphs"  stroke="#111" stroke-width="0.22">SĐT</text>
<text x="263.00" y="94.34" font-size="8.4" fill="#111" text-anchor="middle" font-weight="bold" textLength="89.00" lengthAdjust="spacingAndGlyphs"  stroke="#111" stroke-width="0.22">Nội dung/ Địa chỉ khách</text>
<text x="362.00" y="94.34" font-size="8.4" fill="#111" text-anchor="middle" font-weight="bold" textLength="25.50" lengthAdjust="spacingAndGlyphs"  stroke="#111" stroke-width="0.22">Nguồn</text>
<text x="36.00" y="114.56" font-size="6.6" fill="#111" text-anchor="end" font-weight="bold"  stroke="#111" stroke-width="0.22">1</text>
<text x="36.00" y="139.01" font-size="6.6" fill="#111" text-anchor="end" font-weight="bold"  stroke="#111" stroke-width="0.22">2</text>
<text x="36.00" y="153.51" font-size="6.6" fill="#111" text-anchor="end" font-weight="bold"  stroke="#111" stroke-width="0.22">3</text>
<text x="36.00" y="168.06" font-size="6.6" fill="#111" text-anchor="end" font-weight="bold"  stroke="#111" stroke-width="0.22">4</text>
<text x="36.00" y="182.66" font-size="6.6" fill="#111" text-anchor="end" font-weight="bold"  stroke="#111" stroke-width="0.22">5</text>
<text x="36.00" y="201.91" font-size="6.6" fill="#111" text-anchor="end" font-weight="bold"  stroke="#111" stroke-width="0.22">6</text>
<text x="36.00" y="225.96" font-size="6.6" fill="#111" text-anchor="end" font-weight="bold"  stroke="#111" stroke-width="0.22">7</text>
<text x="36.00" y="249.96" font-size="6.6" fill="#111" text-anchor="end" font-weight="bold"  stroke="#111" stroke-width="0.22">8</text>
<text x="36.00" y="273.81" font-size="6.6" fill="#111" text-anchor="end" font-weight="bold"  stroke="#111" stroke-width="0.22">9</text>
<text x="36.00" y="302.51" font-size="6.6" fill="#111" text-anchor="end" font-weight="bold"  stroke="#111" stroke-width="0.22">10</text>
<text x="36.00" y="335.96" font-size="6.6" fill="#111" text-anchor="end" font-weight="bold"  stroke="#111" stroke-width="0.22">11</text>
<text x="36.00" y="354.96" font-size="6.6" fill="#111" text-anchor="end" font-weight="bold"  stroke="#111" stroke-width="0.22">12</text>
<text x="36.00" y="364.91" font-size="6.6" fill="#111" text-anchor="end" font-weight="bold"  stroke="#111" stroke-width="0.22">13</text>
<text transform="translate(40.20,124.38) scale(0.94,1)" font-size="6.8" fill="#3a3a3a" stroke="#3a3a3a" stroke-width="0.12">Anh Châu</text>
<text transform="translate(40.20,143.78) scale(0.94,1)" font-size="6.8" fill="#3a3a3a" stroke="#3a3a3a" stroke-width="0.12">Minh Hảo</text>
<text transform="translate(40.20,153.38) scale(0.94,1)" font-size="6.8" fill="#3a3a3a" stroke="#3a3a3a" stroke-width="0.12">Anh Khiem</text>
<text transform="translate(40.20,172.88) scale(0.94,1)" font-size="6.8" fill="#3a3a3a" stroke="#3a3a3a" stroke-width="0.12">Anh Bách</text>
<text transform="translate(40.20,182.58) scale(0.94,1)" font-size="6.8" fill="#3a3a3a" stroke="#3a3a3a" stroke-width="0.12">Anh Sơn</text>
<text transform="translate(40.20,201.98) scale(0.94,1)" font-size="6.8" fill="#3a3a3a" stroke="#3a3a3a" stroke-width="0.12">Hùng Đức</text>
<text transform="translate(40.20,226.03) scale(0.94,1)" font-size="6.8" fill="#3a3a3a" stroke="#3a3a3a" stroke-width="0.12">Anh Phước</text>
<text transform="translate(40.20,245.18) scale(0.94,1)" font-size="6.8" fill="#3a3a3a" stroke="#3a3a3a" stroke-width="0.12">Anh Phan Hữu</text>
<text transform="translate(40.20,254.88) scale(0.94,1)" font-size="6.8" fill="#3a3a3a" stroke="#3a3a3a" stroke-width="0.12">Thoai</text>
<text transform="translate(40.20,269.03) scale(0.94,1)" font-size="6.8" fill="#3a3a3a" stroke="#3a3a3a" stroke-width="0.12">Anh Nguyễn</text>
<text transform="translate(40.20,278.73) scale(0.94,1)" font-size="6.8" fill="#3a3a3a" stroke="#3a3a3a" stroke-width="0.12">Trường Giang</text>
<text transform="translate(40.20,302.58) scale(0.94,1)" font-size="6.8" fill="#3a3a3a" stroke="#3a3a3a" stroke-width="0.12">Anh Lê Thành</text>
<text transform="translate(40.20,336.03) scale(0.94,1)" font-size="6.8" fill="#3a3a3a" stroke="#3a3a3a" stroke-width="0.12">Anh Thắng</text>
<text transform="translate(197.60,124.38) scale(1.0,1)" font-size="6.8" fill="#3a3a3a" stroke="#3a3a3a" stroke-width="0.12" text-anchor="end">961466xxx</text>
<text transform="translate(197.60,143.78) scale(1.0,1)" font-size="6.8" fill="#3a3a3a" stroke="#3a3a3a" stroke-width="0.12" text-anchor="end">964386xxx</text>
<text transform="translate(197.60,153.38) scale(1.0,1)" font-size="6.8" fill="#3a3a3a" stroke="#3a3a3a" stroke-width="0.12" text-anchor="end">349526xxx</text>
<text transform="translate(197.60,172.88) scale(1.0,1)" font-size="6.8" fill="#3a3a3a" stroke="#3a3a3a" stroke-width="0.12" text-anchor="end">967333xxx</text>
<text transform="translate(197.60,182.58) scale(1.0,1)" font-size="6.8" fill="#3a3a3a" stroke="#3a3a3a" stroke-width="0.12" text-anchor="end">943167xxx</text>
<text transform="translate(197.60,201.98) scale(1.0,1)" font-size="6.8" fill="#3a3a3a" stroke="#3a3a3a" stroke-width="0.12" text-anchor="end">963971xxx</text>
<text transform="translate(197.60,226.03) scale(1.0,1)" font-size="6.8" fill="#3a3a3a" stroke="#3a3a3a" stroke-width="0.12" text-anchor="end">981361xxx</text>
<text transform="translate(197.60,250.03) scale(1.0,1)" font-size="6.8" fill="#3a3a3a" stroke="#3a3a3a" stroke-width="0.12" text-anchor="end">968233xxx</text>
<text transform="translate(197.60,278.38) scale(1.0,1)" font-size="6.8" fill="#3a3a3a" stroke="#3a3a3a" stroke-width="0.12" text-anchor="end">367613xxx</text>
<text transform="translate(197.60,302.58) scale(1.0,1)" font-size="6.8" fill="#3a3a3a" stroke="#3a3a3a" stroke-width="0.12" text-anchor="end">853838xxx</text>
<text transform="translate(197.60,336.03) scale(1.0,1)" font-size="6.8" fill="#3a3a3a" stroke="#3a3a3a" stroke-width="0.12" text-anchor="end">362869xxx</text>
<text transform="translate(201.00,114.68) scale(0.94,1)" font-size="6.8" fill="#3a3a3a" stroke="#3a3a3a" stroke-width="0.12">Dạ e ở tphcm cho e hỏi khoá học sửa chữa</text>
<text transform="translate(201.00,124.38) scale(0.94,1)" font-size="6.8" fill="#3a3a3a" stroke="#3a3a3a" stroke-width="0.12">laptop online học phí như thế nào ạ ?</text>
<text transform="translate(201.00,134.08) scale(0.94,1)" font-size="6.8" fill="#3a3a3a" stroke="#3a3a3a" stroke-width="0.12">Em muốn hc sửa chữa máy tính ý ạ Chi phí</text>
<text transform="translate(201.00,143.78) scale(0.94,1)" font-size="6.8" fill="#3a3a3a" stroke="#3a3a3a" stroke-width="0.12">học tập và đào tạo ra sao a</text>
<text transform="translate(201.00,153.38) scale(0.94,1)" font-size="6.8" fill="#3a3a3a" stroke="#3a3a3a" stroke-width="0.12">kh cần tv khoá học ở HN</text>
<text transform="translate(201.00,163.18) scale(0.94,1)" font-size="6.8" fill="#3a3a3a" stroke="#3a3a3a" stroke-width="0.12">kh cần tv khoá học ở HN và cho người xuất</text>
<text transform="translate(201.00,172.88) scale(0.94,1)" font-size="6.8" fill="#3a3a3a" stroke="#3a3a3a" stroke-width="0.12">ngủ a</text>
<text transform="translate(201.00,182.58) scale(0.94,1)" font-size="6.8" fill="#3a3a3a" stroke="#3a3a3a" stroke-width="0.12">kh cần tv khoá học ạ</text>
<text transform="translate(201.00,191.98) scale(0.94,1)" font-size="6.8" fill="#3a3a3a" stroke="#3a3a3a" stroke-width="0.12">Địa chỉ: xóm Thi Tứ, Xã Bình Minh, Nghệ</text>
<text transform="translate(201.00,201.68) scale(0.94,1)" font-size="6.8" fill="#3a3a3a" stroke="#3a3a3a" stroke-width="0.12">An</text>
<text transform="translate(201.00,211.38) scale(0.94,1)" font-size="6.8" fill="#3a3a3a" stroke="#3a3a3a" stroke-width="0.12">Gửi về cho mình combo 3 khoá học nhé</text>
<text transform="translate(201.00,220.98) scale(0.94,1)" font-size="6.8" fill="#3a3a3a" stroke="#3a3a3a" stroke-width="0.12">Đ/c: Viện nghiên cứu cơ khí, số 4 Phạm Văn</text>
<text transform="translate(201.00,230.68) scale(0.94,1)" font-size="6.8" fill="#3a3a3a" stroke="#3a3a3a" stroke-width="0.12">Đông, phường Mai Dịch, Cầu Giấy</text>
<text transform="translate(201.00,245.18) scale(0.94,1)" font-size="6.8" fill="#3a3a3a" stroke="#3a3a3a" stroke-width="0.12">Khách muốn mua 2 cuốn sách cơ bản và</text>
<text transform="translate(201.00,254.88) scale(0.94,1)" font-size="6.8" fill="#3a3a3a" stroke="#3a3a3a" stroke-width="0.12">nâng cao. Em đã báo giá 500k+freeship.</text>
<text transform="translate(201.00,269.03) scale(0.94,1)" font-size="6.8" fill="#3a3a3a" stroke="#3a3a3a" stroke-width="0.12">Cho mình hỏi khoá học bên mình là bnh</text>
<text transform="translate(201.00,278.73) scale(0.94,1)" font-size="6.8" fill="#3a3a3a" stroke="#3a3a3a" stroke-width="0.12">aaa kh ở đống đa</text>
<text transform="translate(201.00,288.03) scale(0.94,1)" font-size="6.8" fill="#3a3a3a" stroke="#3a3a3a" stroke-width="0.12">mình đang là kỹ thuật của hàng laptop và</text>
<text transform="translate(201.00,297.73) scale(0.94,1)" font-size="6.8" fill="#3a3a3a" stroke="#3a3a3a" stroke-width="0.12">cần đi học thêm, mình muốn tham khảo</text>
<text transform="translate(201.00,307.43) scale(0.94,1)" font-size="6.8" fill="#3a3a3a" stroke="#3a3a3a" stroke-width="0.12">khóa lv2 lv3 bên bạn, mình muốn trao đổi</text>
<text transform="translate(201.00,317.13) scale(0.94,1)" font-size="6.8" fill="#3a3a3a" stroke="#3a3a3a" stroke-width="0.12">vài vấn đề</text>
<text transform="translate(201.00,326.33) scale(0.94,1)" font-size="6.8" fill="#3a3a3a" stroke="#3a3a3a" stroke-width="0.12">chi cho em xin thông tin cụ thể của từng</text>
<text transform="translate(201.00,336.03) scale(0.94,1)" font-size="6.8" fill="#3a3a3a" stroke="#3a3a3a" stroke-width="0.12">khoá học được không ạ. Về lộ trình và lịch</text>
<text transform="translate(201.00,345.73) scale(0.94,1)" font-size="6.8" fill="#3a3a3a" stroke="#3a3a3a" stroke-width="0.12">học a kh ở dĩ an ạ</text>
<text transform="translate(329.00,114.63) scale(0.94,1)" font-size="6.8" fill="#3a3a3a" stroke="#3a3a3a" stroke-width="0.12">Zalo oa</text>
<text transform="translate(329.00,139.08) scale(0.94,1)" font-size="6.8" fill="#2c7a57" stroke="#2c7a57" stroke-width="0.12">Fanpage</text>
<text transform="translate(329.00,153.58) scale(0.94,1)" font-size="6.8" fill="#2c7a57" stroke="#2c7a57" stroke-width="0.12">Fanpage</text>
<text transform="translate(329.00,168.13) scale(0.94,1)" font-size="6.8" fill="#2c7a57" stroke="#2c7a57" stroke-width="0.12">Fanpage</text>
<text transform="translate(329.00,182.73) scale(0.94,1)" font-size="6.8" fill="#b5221c" stroke="#b5221c" stroke-width="0.12">Tiktok</text>
<text transform="translate(329.00,201.98) scale(0.94,1)" font-size="6.8" fill="#2c7a57" stroke="#2c7a57" stroke-width="0.12">Fanpage</text>
<text transform="translate(329.00,226.03) scale(0.94,1)" font-size="6.8" fill="#2c7a57" stroke="#2c7a57" stroke-width="0.12">Fanpage</text>
<text transform="translate(329.00,250.03) scale(0.94,1)" font-size="6.8" fill="#2c7a57" stroke="#2c7a57" stroke-width="0.12">Fanpage</text>
<text transform="translate(329.00,278.38) scale(0.94,1)" font-size="6.8" fill="#2c7a57" stroke="#2c7a57" stroke-width="0.12">Fanpage</text>
<text transform="translate(329.00,302.58) scale(0.94,1)" font-size="6.8" fill="#3f626b" stroke="#3f626b" stroke-width="0.12">WEb</text>
<text transform="translate(329.00,336.03) scale(0.94,1)" font-size="6.8" fill="#3f626b" stroke="#3f626b" stroke-width="0.12">WEb</text>
<defs><filter id="sh" x="-10%" y="-40%" width="120%" height="200%"><feGaussianBlur stdDeviation="4.5"/></filter></defs>
<rect x="266" y="201" width="297" height="52" rx="4" fill="#000" opacity="0.24" filter="url(#sh)"/>
<rect x="267.6" y="197.3" width="293.9" height="48.7" rx="3" fill="#9a9a9a" opacity="0.4"/>
<rect x="268" y="197.7" width="293.1" height="47.9" rx="2.6" fill="#f3f3f3"/>
<text x="271.40" y="206.05" font-size="5.3" fill="#222" textLength="33.80" lengthAdjust="spacingAndGlyphs"  stroke="#222" stroke-width="0.12">Microsoft Excel</text>
<path d="M553.4 202l4 4M557.4 202l-4 4" stroke="#2a2a2a" stroke-width="0.65"/>
<circle cx="282" cy="223.1" r="7.1" fill="#0f80d4"/>
<rect x="281.30" y="221.80" width="1.40" height="4.80" fill="#c9eafb" />
<rect x="281.30" y="219.30" width="1.40" height="1.40" fill="#c9eafb" />
<text x="296.00" y="225.78" font-size="5.1" fill="#1c1c1c" textLength="260.00" lengthAdjust="spacingAndGlyphs"  stroke="#1c1c1c" stroke-width="0.14">2 duplicate values found and removed; 11 unique values remain. Note that counts may include empty cells, spaces, etc.</text>
<rect x="400.6" y="234.7" width="28.4" height="8.7" rx="1.5" fill="#fcfcfc" stroke="#68a5d2" stroke-width="0.7"/>
<text x="414.80" y="240.78" font-size="4.8" fill="#222" text-anchor="middle"  stroke="#222" stroke-width="0.12">OK</text>
</svg>
</body></html>
